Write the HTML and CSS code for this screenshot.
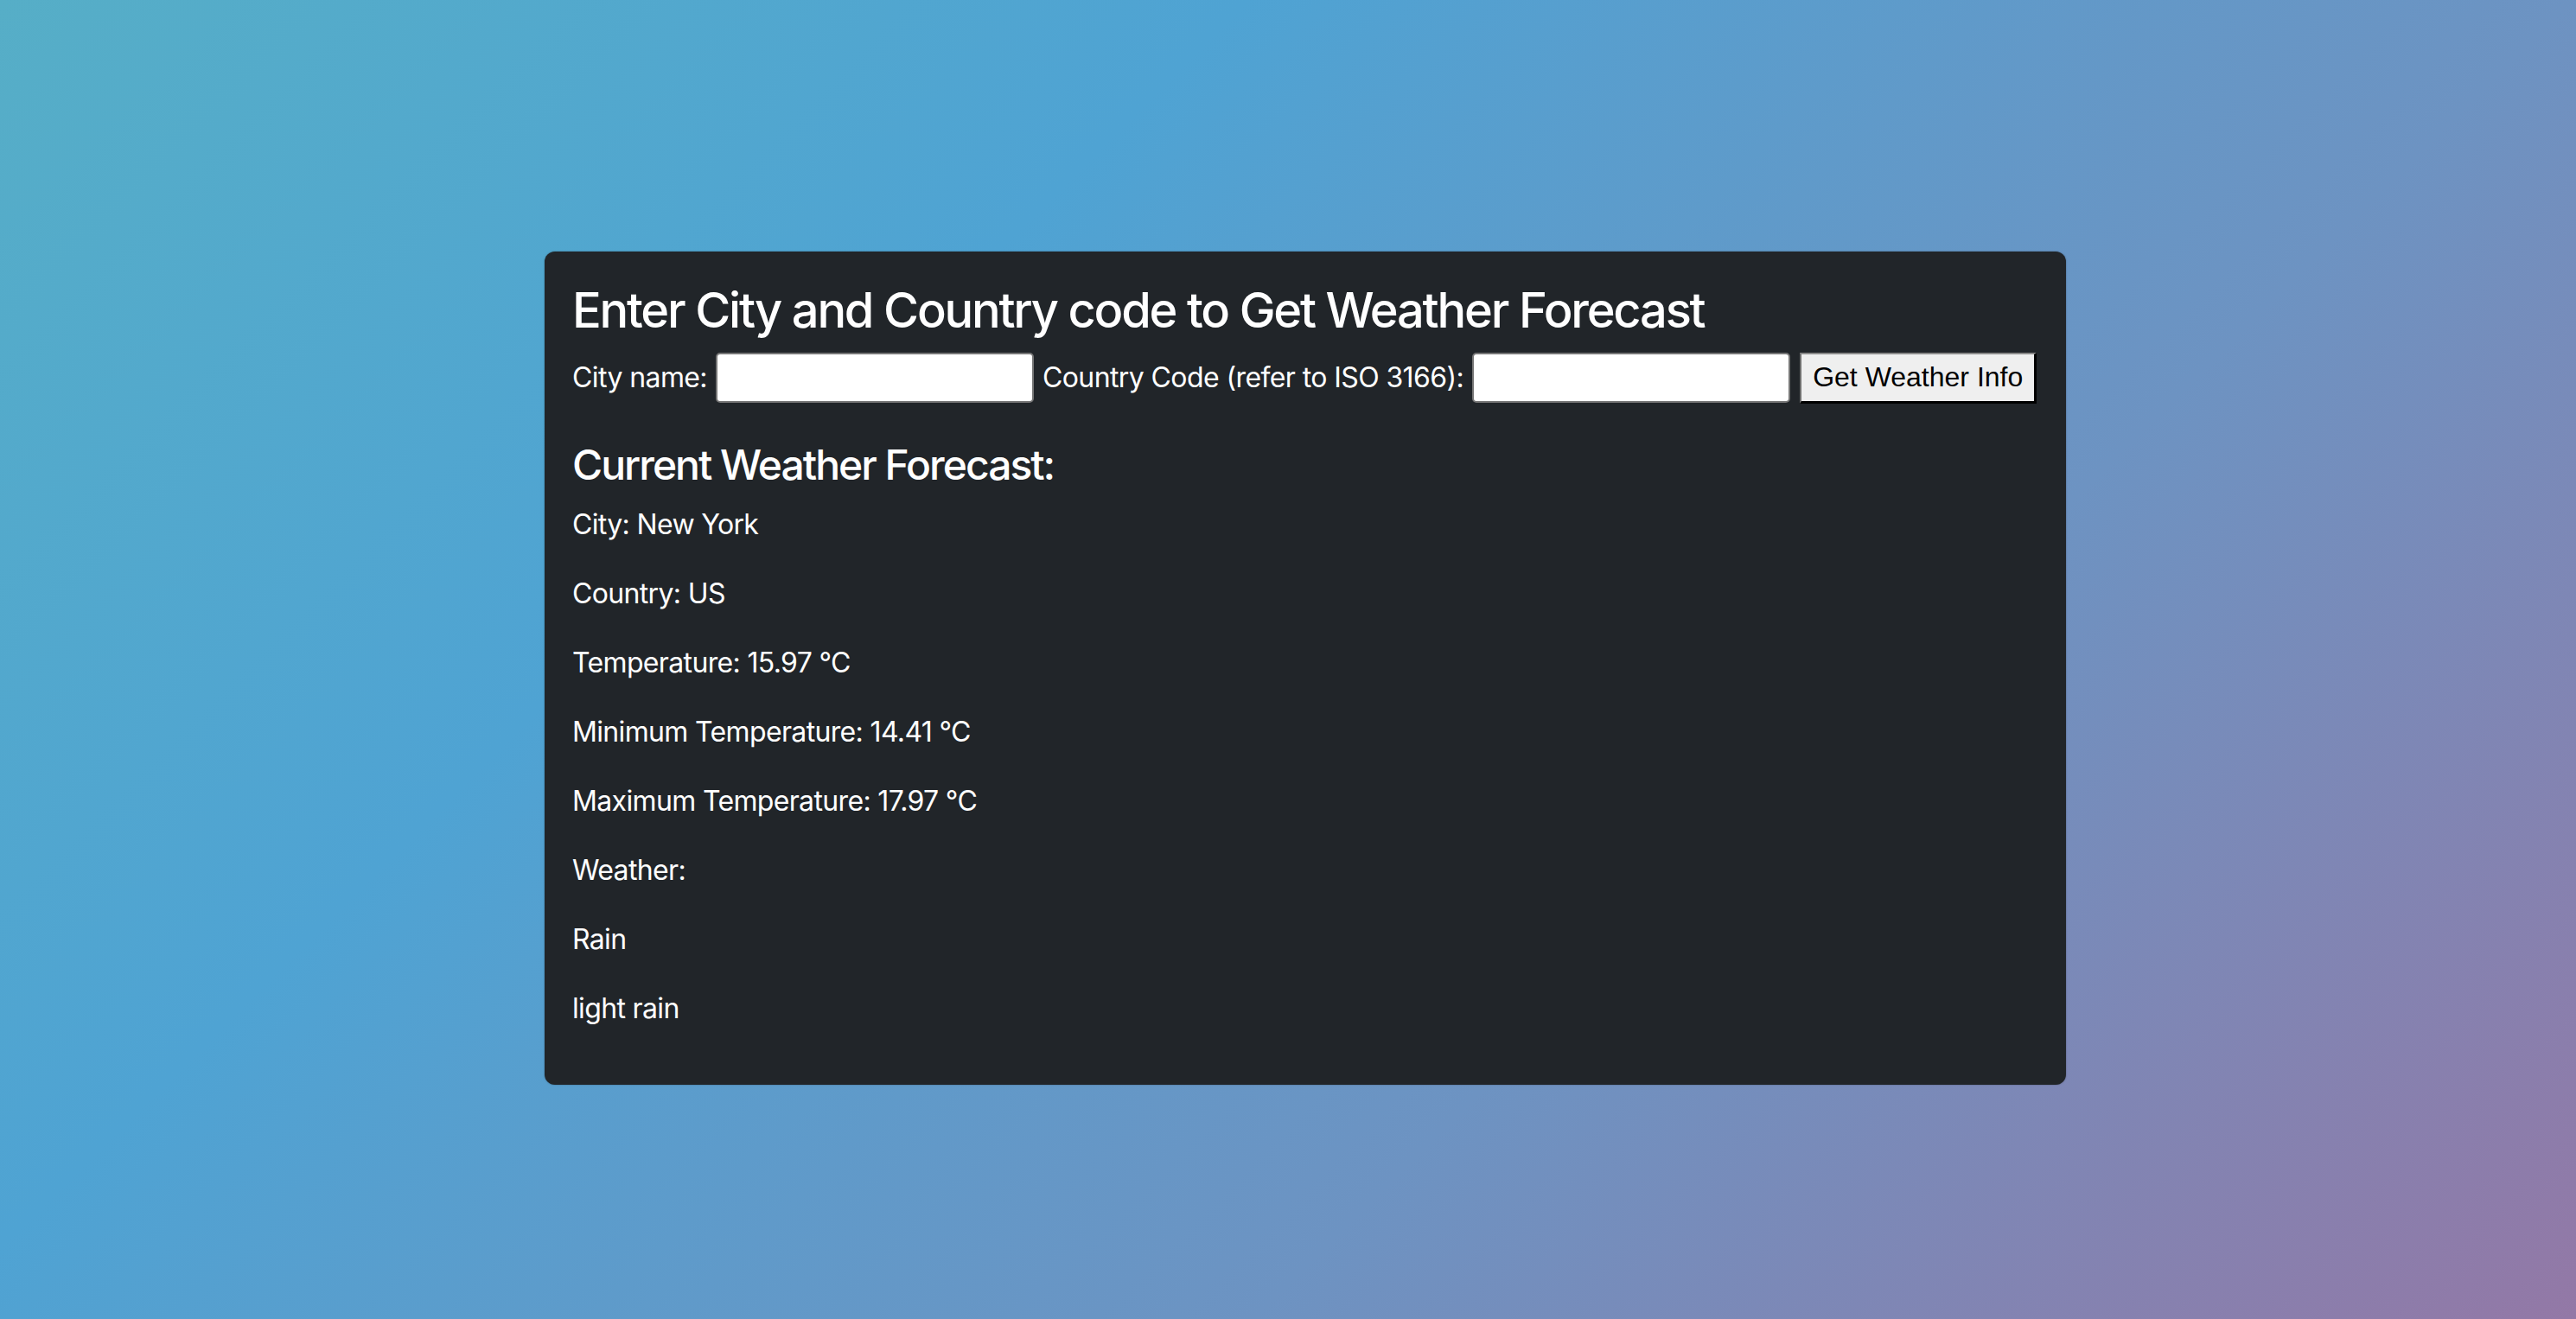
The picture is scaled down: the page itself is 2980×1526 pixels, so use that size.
FILE: index.html
```html
<!DOCTYPE html>
<html lang="en">
<head>
<meta charset="utf-8">
<title>Weather Forecast</title>
<link rel="stylesheet" href="styles.css">
</head>
<body>
<main class="card">
  <h3 class="title">Enter City and Country code to Get Weather Forecast</h3>
  <form class="search">
    <label class="field-label" for="city">City name:</label>
    <input class="field-input" id="city" type="text">
    <label class="field-label" for="country">Country Code (refer to ISO 3166):</label>
    <input class="field-input" id="country" type="text">
    <button class="submit" type="button">Get Weather Info</button>
  </form>
  <h4 class="subtitle">Current Weather Forecast:</h4>
  <p class="line">City: New York</p>
  <p class="line">Country: US</p>
  <p class="line">Temperature: 15.97 °C</p>
  <p class="line">Minimum Temperature: 14.41 °C</p>
  <p class="line">Maximum Temperature: 17.97 °C</p>
  <p class="line">Weather:</p>
  <p class="line">Rain</p>
  <p class="line">light rain</p>
</main>
</body>
</html>
```

FILE: styles.css
```css
html, body {
  margin: 0;
  padding: 0;
}

body {
  min-height: 100vh;
  box-sizing: border-box;
  padding: 291px 0 0 630px;
  background: linear-gradient(135deg, #56aec7 0%, #4fa3d3 32%, #6d93c2 66%, #9378a6 100%);
  font-family: Inter, "Noto Sans", "Liberation Sans", sans-serif;
  font-size: 32px;
  line-height: 1.5;
  color: #ffffff;
}

.card {
  width: 1760px;
  box-sizing: border-box;
  padding: 32px;
  background: #212529;
  border-radius: 12px;
  box-shadow: 0 0 2px rgba(0, 0, 0, 0.35);
}

.title {
  margin: 0 0 13px;
  padding-top: 3px;
  font-size: 56px;
  font-weight: 500;
  line-height: 1.2;
  letter-spacing: -2.2px;
}

.search {
  display: flex;
  align-items: center;
  gap: 10px;
  height: 62px;
  margin: 0;
}

.field-label {
  white-space: nowrap;
  letter-spacing: -0.6px;
}

.field-input {
  width: 368px;
  height: 58px;
  box-sizing: border-box;
  margin: 0;
  padding: 2px 4px;
  border: 2px solid #767676;
  border-radius: 5px;
  background: #ffffff;
  font-family: "Liberation Sans", Arial, sans-serif;
  font-size: 27px;
}

.submit {
  height: 59px;
  box-sizing: border-box;
  margin: 0 0 0 1px;
  padding: 0 13px;
  border-style: solid;
  border-width: 2px 3px 3px 2px;
  border-color: #8a8a8a #000000 #000000 #6f6f6f;
  background: #efefef;
  color: #000000;
  font-family: "Liberation Sans", Arial, sans-serif;
  font-size: 32px;
  white-space: nowrap;
}

.subtitle {
  margin: 41px 0 16px;
  font-size: 48px;
  font-weight: 500;
  line-height: 1.2;
  letter-spacing: -2px;
}

.line {
  margin: 0 0 32px;
  letter-spacing: -0.65px;
}
```
